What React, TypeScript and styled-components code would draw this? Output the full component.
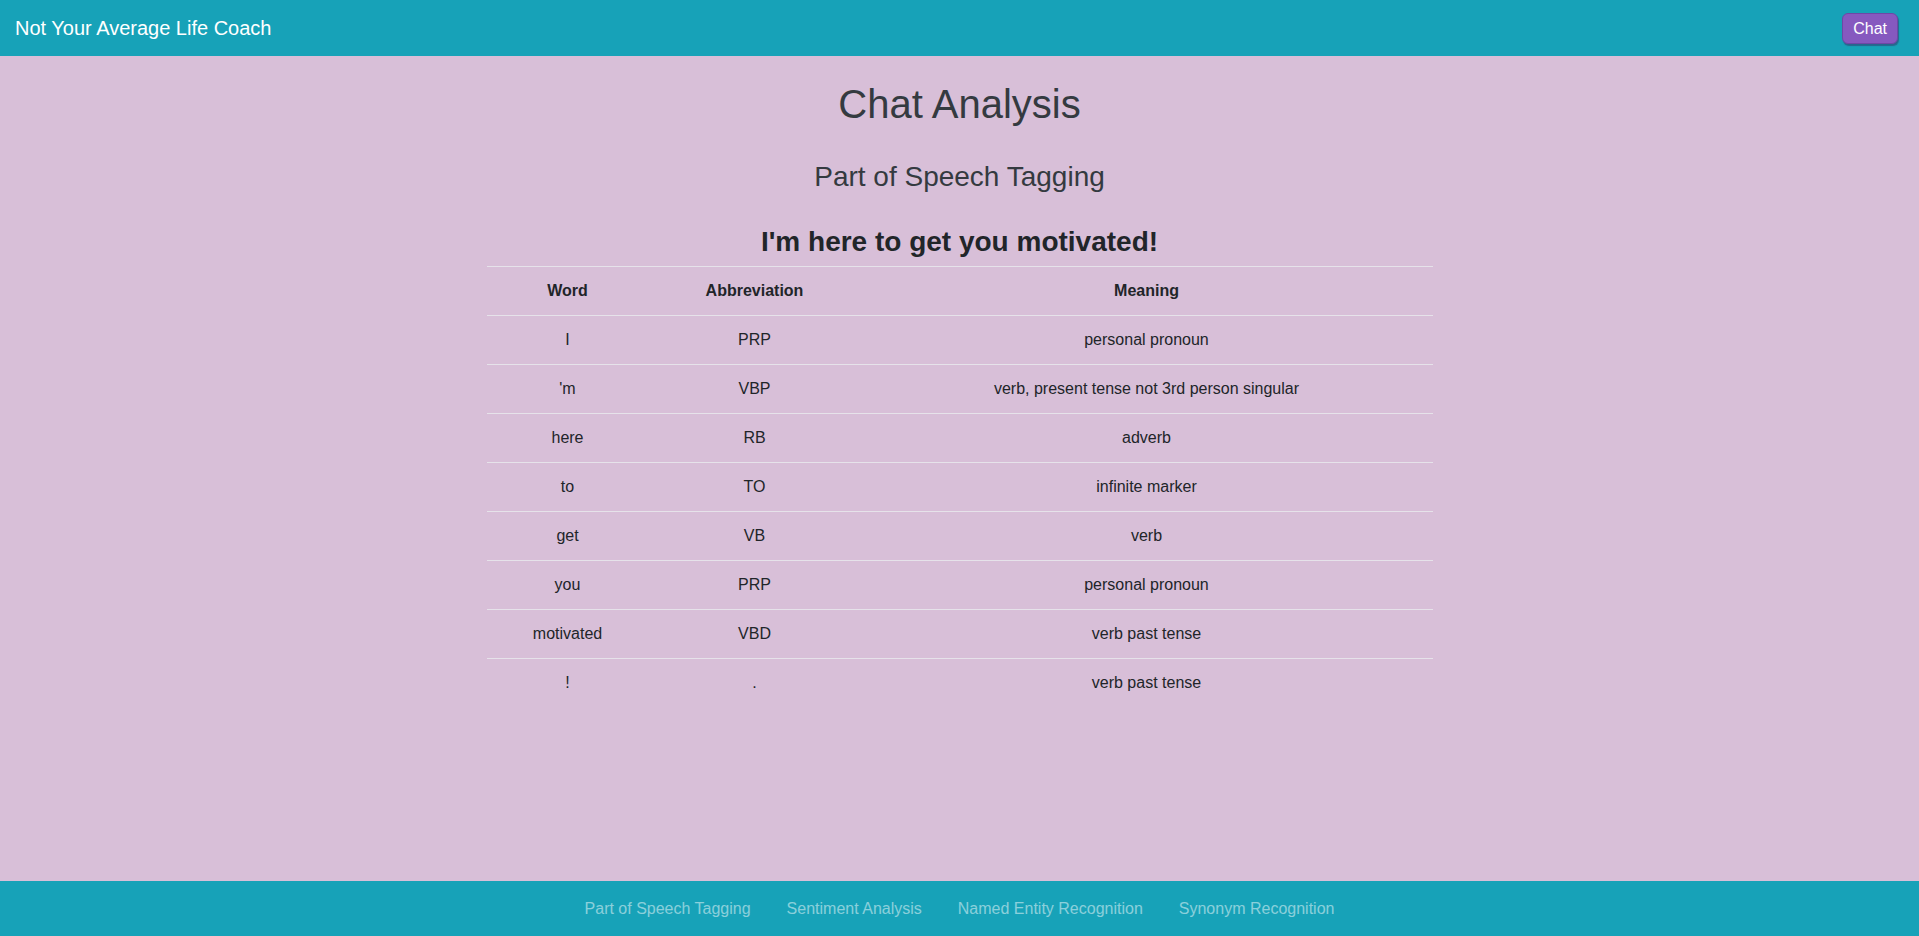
import React from "react";
import styled, { createGlobalStyle } from "styled-components";

const GlobalStyle = createGlobalStyle`
  html, body { margin: 0; padding: 0; }
  body {
    font-family: "Liberation Sans", Arial, Helvetica, sans-serif;
    font-size: 16px;
    line-height: 1.5;
    color: #212529;
    background: #d8bfd8;
  }
  * { box-sizing: border-box; }
`;

const Page = styled.div`
  min-height: 100vh;
  display: flex;
  flex-direction: column;
`;

const NavBar = styled.header`
  height: 56px;
  background: #17a2b8;
  display: flex;
  align-items: center;
  justify-content: space-between;
  padding: 0 21px 0 15px;
`;

const Brand = styled.a`
  color: #fff;
  font-size: 20px;
  line-height: 30px;
  text-decoration: none;
`;

const ChatButton = styled.button`
  font-family: inherit;
  font-size: 16px;
  line-height: 20px;
  color: #fff;
  background: #8659bf;
  border: 1px solid #6f47a6;
  border-radius: 6px;
  padding: 5px 10px;
  height: 31px;
  box-shadow: 1px 2px 1px rgba(60, 30, 90, 0.45);
  cursor: pointer;
`;

const Main = styled.main`
  flex: 1;
  display: flex;
  flex-direction: column;
  align-items: center;
  padding-top: 24px;
`;

const Title = styled.h1`
  margin: 0;
  font-size: 40px;
  font-weight: 400;
  line-height: 48px;
  color: #343a40;
`;

const Subtitle = styled.h3`
  margin: 32px 0 0;
  font-size: 28px;
  font-weight: 400;
  line-height: 34px;
  color: #343a40;
`;

const Motto = styled.h3`
  margin: 31px 0 0;
  font-size: 28px;
  font-weight: 700;
  line-height: 34px;
  color: #212529;
`;

const Table = styled.table`
  margin-top: 7px;
  width: 946px;
  border-collapse: collapse;
  text-align: center;
`;

const HeadCell = styled.th<{ $w?: number }>`
  width: ${(p) => (p.$w ? `${p.$w}px` : "auto")};
  padding: 12px;
  line-height: 24px;
  font-weight: 700;
  border-top: 1px solid #e6e2ea;
`;

const Cell = styled.td`
  padding: 12px;
  line-height: 24px;
  border-top: 1px solid #e6e2ea;
`;

const Footer = styled.footer`
  height: 55px;
  background: #17a2b8;
  display: flex;
  align-items: center;
  justify-content: center;
`;

const FooterLink = styled.a`
  color: rgba(255, 255, 255, 0.5);
  font-size: 16px;
  line-height: 24px;
  padding: 8px 18px;
  text-decoration: none;
`;

const rows: [string, string, string][] = [
  ["I", "PRP", "personal pronoun"],
  ["'m", "VBP", "verb, present tense not 3rd person singular"],
  ["here", "RB", "adverb"],
  ["to", "TO", "infinite marker"],
  ["get", "VB", "verb"],
  ["you", "PRP", "personal pronoun"],
  ["motivated", "VBD", "verb past tense"],
  ["!", ".", "verb past tense"],
];

export default function App() {
  return (
    <Page>
      <GlobalStyle />
      <NavBar>
        <Brand href="#">Not Your Average Life Coach</Brand>
        <ChatButton>Chat</ChatButton>
      </NavBar>
      <Main>
        <Title>Chat Analysis</Title>
        <Subtitle>Part of Speech Tagging</Subtitle>
        <Motto>I'm here to get you motivated!</Motto>
        <Table>
          <thead>
            <tr>
              <HeadCell $w={162}>Word</HeadCell>
              <HeadCell $w={212}>Abbreviation</HeadCell>
              <HeadCell>Meaning</HeadCell>
            </tr>
          </thead>
          <tbody>
            {rows.map(([w, a, m], i) => (
              <tr key={i}>
                <Cell>{w}</Cell>
                <Cell>{a}</Cell>
                <Cell>{m}</Cell>
              </tr>
            ))}
          </tbody>
        </Table>
      </Main>
      <Footer>
        <FooterLink href="#">Part of Speech Tagging</FooterLink>
        <FooterLink href="#">Sentiment Analysis</FooterLink>
        <FooterLink href="#">Named Entity Recognition</FooterLink>
        <FooterLink href="#">Synonym Recognition</FooterLink>
      </Footer>
    </Page>
  );
}
